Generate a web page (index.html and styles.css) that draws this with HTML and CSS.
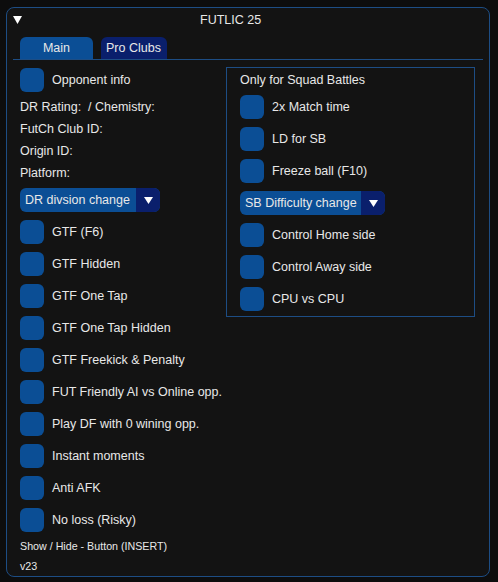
FILE: index.html
```html
<!DOCTYPE html>
<html>
<head>
<meta charset="utf-8">
<link rel="stylesheet" href="styles.css">
</head>
<body>
<div class="window">
  <div class="titlebar">
    <svg class="collapse" width="9" height="8" viewBox="0 0 9 8"><polygon points="0,0 9,0 4.5,8" fill="#ffffff"/></svg>
    <span class="title">FUTLIC 25</span>
  </div>
  <div class="tabbar">
    <div class="tab tab-active">Main</div>
    <div class="tab tab-inactive">Pro Clubs</div>
  </div>
  <div class="content">
    <div class="leftcol">
      <div class="check"><span class="box"></span><span class="label">Opponent info</span></div>
      <div class="text">DR Rating:&nbsp; / Chemistry:</div>
      <div class="text">FutCh Club ID:</div>
      <div class="text">Origin ID:</div>
      <div class="text">Platform:</div>
      <div class="combo combo-dr"><span class="combo-text">DR divsion change</span><span class="combo-arrow"><svg width="9" height="7" viewBox="0 0 9 7"><polygon points="0,0 9,0 4.5,7" fill="#ffffff"/></svg></span></div>
      <div class="check"><span class="box"></span><span class="label">GTF (F6)</span></div>
      <div class="check"><span class="box"></span><span class="label">GTF Hidden</span></div>
      <div class="check"><span class="box"></span><span class="label">GTF One Tap</span></div>
      <div class="check"><span class="box"></span><span class="label">GTF One Tap Hidden</span></div>
      <div class="check"><span class="box"></span><span class="label">GTF Freekick &amp; Penalty</span></div>
      <div class="check"><span class="box"></span><span class="label">FUT Friendly AI vs Online opp.</span></div>
      <div class="check"><span class="box"></span><span class="label">Play DF with 0 wining opp.</span></div>
      <div class="check"><span class="box"></span><span class="label">Instant moments</span></div>
      <div class="check"><span class="box"></span><span class="label">Anti AFK</span></div>
      <div class="check"><span class="box"></span><span class="label">No loss (Risky)</span></div>
      <div class="small">Show / Hide - Button (INSERT)</div>
      <div class="small">v23</div>
    </div>
    <div class="panel">
      <div class="text">Only for Squad Battles</div>
      <div class="check"><span class="box"></span><span class="label">2x Match time</span></div>
      <div class="check"><span class="box"></span><span class="label">LD for SB</span></div>
      <div class="check"><span class="box"></span><span class="label">Freeze ball (F10)</span></div>
      <div class="combo combo-sb"><span class="combo-text">SB Difficulty change</span><span class="combo-arrow"><svg width="9" height="7" viewBox="0 0 9 7"><polygon points="0,0 9,0 4.5,7" fill="#ffffff"/></svg></span></div>
      <div class="check"><span class="box"></span><span class="label">Control Home side</span></div>
      <div class="check"><span class="box"></span><span class="label">Control Away side</span></div>
      <div class="check"><span class="box"></span><span class="label">CPU vs CPU</span></div>
    </div>
  </div>
</div>
</body>
</html>
```
FILE: styles.css
```css
html, body {
  margin: 0;
  padding: 0;
  background: #0d0d0d;
}
body {
  padding: 7px 0 0 6px;
  font-family: "Liberation Sans", Arial, sans-serif;
  font-size: 12.5px;
  color: #e8e8e8;
}
.window {
  box-sizing: border-box;
  width: 484px;
  height: 570px;
  background: #131313;
  border: 1px solid #1d4d84;
  border-radius: 8px;
  overflow: hidden;
}
.titlebar {
  height: 23px;
  display: flex;
  align-items: center;
  padding-left: 6px;
}
.collapse {
  display: block;
  margin-top: 1px;
}
.title {
  margin-left: 178px;
  font-size: 12.5px;
  line-height: 14px;
}
.tabbar {
  margin: 6px 6px 0 6px;
  padding-left: 7px;
  display: flex;
  gap: 8px;
  border-bottom: 1px solid #1d4d84;
}
.tab {
  height: 22px;
  line-height: 22px;
  border-radius: 6px 6px 0 0;
  box-sizing: border-box;
}
.tab-active {
  width: 73px;
  text-align: center;
  background: #0b4e95;
}
.tab-inactive {
  padding: 0 6px 0 5px;
  background: #0a1f6c;
}
.content {
  display: flex;
  align-items: flex-start;
  padding: 8px 13px 0 13px;
}
.leftcol {
  width: 206px;
  flex: none;
  display: flex;
  flex-direction: column;
  gap: 8px;
  white-space: nowrap;
}
.panel {
  box-sizing: border-box;
  width: 249px;
  margin-top: -1px;
  border: 1px solid #1d4d84;
  padding: 5px 13px 5px 13px;
  display: flex;
  flex-direction: column;
  gap: 8px;
  white-space: nowrap;
}
.text {
  height: 14px;
  line-height: 14px;
}
.check {
  display: flex;
  align-items: center;
  height: 24px;
}
.box {
  width: 24px;
  height: 24px;
  border-radius: 6px;
  background: #0b4e95;
  flex: none;
}
.label {
  margin-left: 8px;
  line-height: 14px;
}
.combo {
  display: flex;
  height: 24px;
  border-radius: 6px;
  overflow: hidden;
  background: #0b4e95;
}
.combo-dr {
  width: 140px;
}
.combo-sb {
  width: 145px;
}
.combo-text {
  flex: 1;
  padding-left: 5px;
  line-height: 24px;
}
.combo-arrow {
  width: 24px;
  flex: none;
  background: #0a1f6c;
  display: flex;
  align-items: center;
  justify-content: center;
}
.combo-arrow svg {
  display: block;
}
.small {
  font-size: 10.7px;
  height: 12px;
  line-height: 12px;
}
```
